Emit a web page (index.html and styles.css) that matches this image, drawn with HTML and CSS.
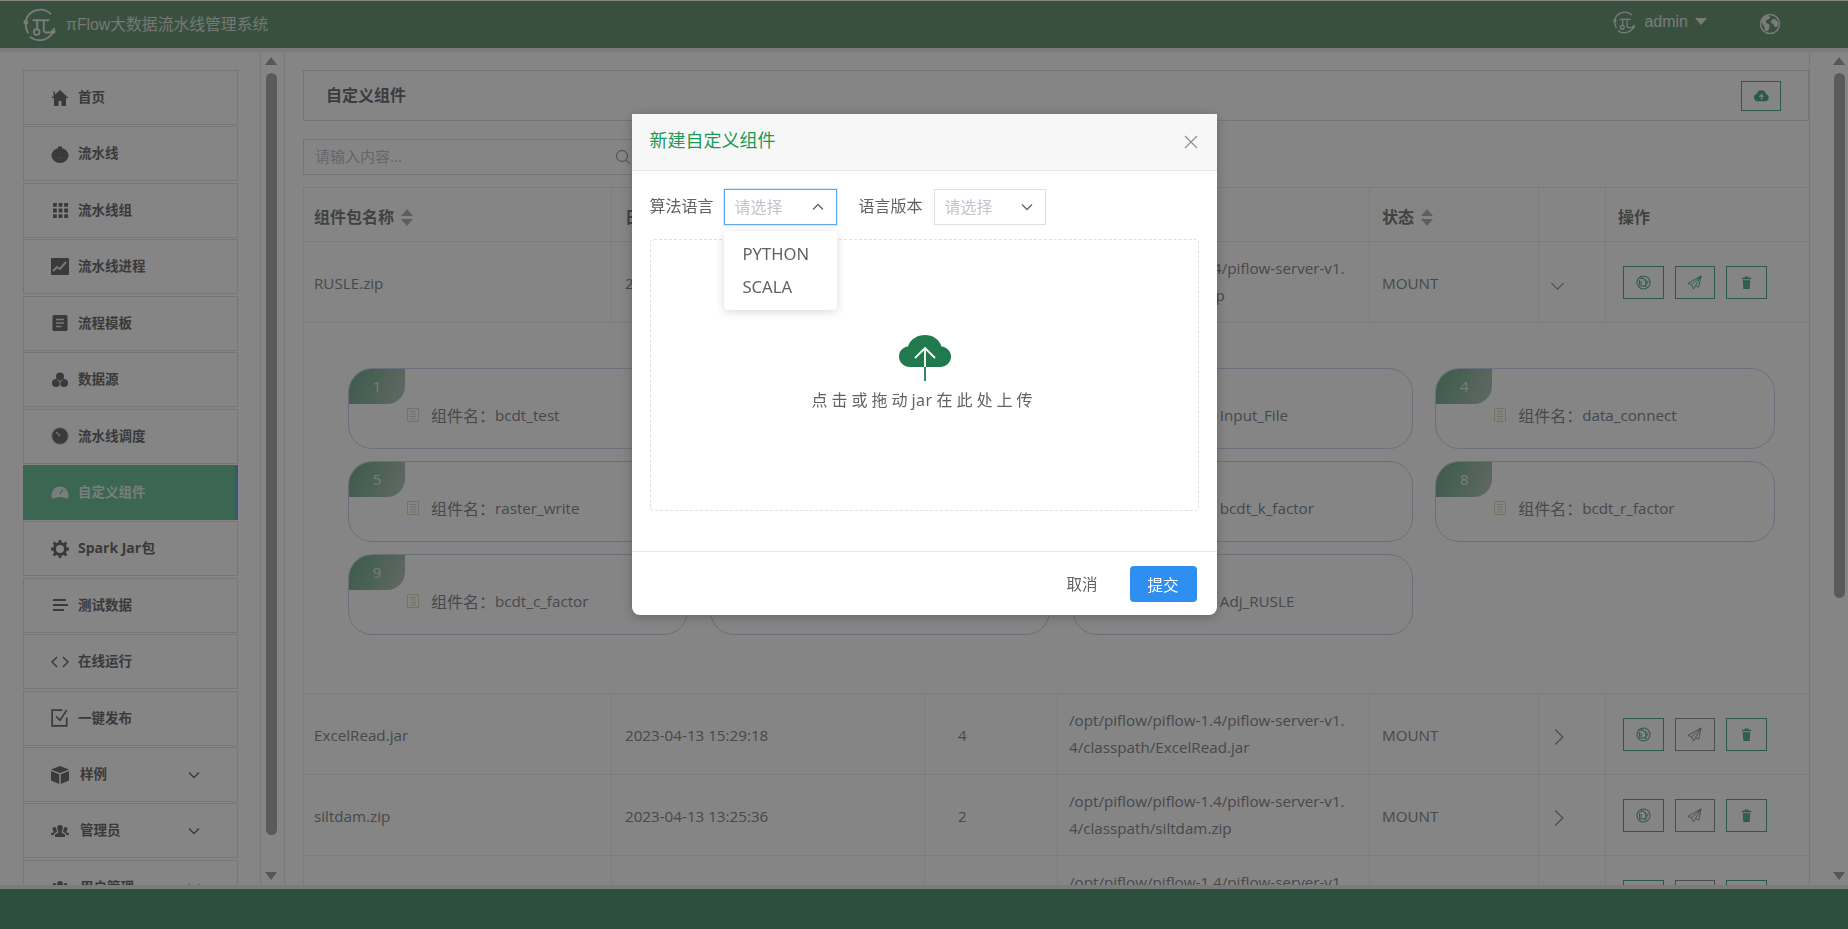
FILE: index.html
```html
<!DOCTYPE html>
<html lang="zh-CN">
<head>
<meta charset="utf-8">
<title>πFlow大数据流水线管理系统</title>
<link rel="stylesheet" href="styles.css">
</head>
<body>
<svg class="defs" width="0" height="0" aria-hidden="true">
  <symbol id="i-logo" viewBox="0 0 36 36">
    <g fill="none" stroke="currentColor" stroke-width="2" stroke-linecap="round">
      <path d="M3 13A16 16 0 0 1 29 6"/>
      <path d="M33 22A16 16 0 0 1 8 31"/>
      <path d="M3 17A16 16 0 0 0 5 26"/>
      <path d="M11 13H27"/>
      <path d="M15 13V22"/>
      <path d="M22 13V23Q22 26 25 26H31"/>
      <circle cx="14.500" cy="25.500" r="3"/>
    </g>
    <circle cx="3" cy="15" r="2.500" fill="currentColor"/>
    <circle cx="32" cy="25" r="2.500" fill="currentColor"/>
  </symbol>
  <symbol id="i-aperture" viewBox="0 0 16 16">
    <circle cx="8" cy="8" r="7" fill="none" stroke="currentColor" stroke-width="1.100"/>
    <path d="M5.500 2.500L11.500 6M13 6.500L9 12.500M11.500 12L4.500 11.500M4 12L3.500 5M4 3.500L8.500 3.500M9.500 5.500L11 9.500M5.500 6.500L5.500 10" fill="none" stroke="currentColor" stroke-width="1.100"/>
  </symbol>
  <symbol id="i-send" viewBox="0 0 16 16">
    <path d="M15 1L1 9l4 1.500L7 15l2-3.500 3.500 1.500ZM15 1L5 10.500M15 1L9 11.500" fill="none" stroke="currentColor" stroke-width="1" stroke-linejoin="round"/>
  </symbol>
  <symbol id="i-trash" viewBox="0 0 16 16">
    <path d="M3 3h10v1.500H3ZM6 1.500h4V3H6ZM4 5.500h8L11.300 15H4.700Z" fill="currentColor"/>
    <path d="M6.500 7v6.500M9.500 7v6.500" stroke="#ffffff" stroke-opacity=".35" stroke-width=".8"/>
  </symbol>
  <symbol id="i-doc" viewBox="0 0 14 14">
    <path d="M1.500.5h11v13h-11ZM4 3.500h6M4 6h6M4 8.500h6M4 11h6" fill="none" stroke="currentColor"/>
  </symbol>
  <symbol id="i-chev" viewBox="0 0 12 8">
    <path d="M1 1.500L6 6.500l5-5" fill="none" stroke="currentColor"/>
  </symbol>
  <symbol id="i-users" viewBox="0 0 18 14">
    <path d="M9 1a2.800 2.800 0 0 1 2.800 3c0 1.500-.8 3-1.300 3.500v1L14 10.500V13H4v-2.500l3.500-2v-1C7 7 6.200 5.500 6.200 4A2.800 2.800 0 0 1 9 1ZM3.500 3a2 2 0 0 1 1.700 1c0 1.500.5 3 1 3.700L3 9.500V11H0V9.500l2.500-1.300v-1C2 6.500 1.500 5.500 1.500 5a2 2 0 0 1 2-2ZM14.500 3a2 2 0 0 1 2 2c0 .5-.5 1.500-1 2.200v1L18 9.500V11h-3V9.500l-3.200-1.800c.5-.7 1-2.200 1-3.700A2 2 0 0 1 14.500 3Z" fill="currentColor"/>
  </symbol>
</svg>

<header class="topbar">
  <div class="brand">
    <svg class="logo"><use href="#i-logo"/></svg>
    <span class="brand-name">πFlow大数据流水线管理系统</span>
  </div>
  <div class="user">
    <svg class="logo-small"><use href="#i-logo"/></svg>
    <span class="user-name">admin</span>
    <span class="user-caret"></span>
    <svg class="globe" viewBox="0 0 22 22">
      <circle cx="11" cy="11" r="9.500" fill="none" stroke="currentColor" stroke-width="1.500"/>
      <path d="M8 2.500c2 1 3.500 1 3 2.500S8 6 7 8s2 2.500 3 3.500.5 4-.5 5.500S7 19 6 17 5 12 3 10 4 4 8 2.500ZM14 6c2-.5 4 1 5 3.500.5 2 0 3-1 4s-3 1-3-1-2.500-1.500-3-3S13 6.500 14 6Z" fill="currentColor"/>
    </svg>
  </div>
</header>

<div class="main">
  <aside class="side">
    <nav class="menu">
      <a class="item"><span class="ico"><svg viewBox="0 0 18 18"><path d="M9 1L4 5.500V2.500H2.500v4.500L.5 9h2.500v8h4.500v-5h3v5H15V9h2.500Z" fill="currentColor"/></svg></span><span class="txt">首页</span></a>
      <a class="item"><span class="ico"><svg viewBox="0 0 18 18"><ellipse cx="9" cy="10.500" rx="8.500" ry="7.500" fill="currentColor"/><path d="M7 3.500h4V1.500H7Z" fill="currentColor"/><path d="M7 13h1M10 13h1" stroke="#b8b8b8"/></svg></span><span class="txt">流水线</span></a>
      <a class="item"><span class="ico"><svg viewBox="0 0 18 18"><path d="M2 2h3.800v3.800H2ZM7.600 2h3.800v3.800H7.600ZM13.200 2H17v3.800h-3.800ZM2 7.600h3.800v3.800H2ZM7.600 7.600h3.800v3.800H7.600ZM13.200 7.600H17v3.800h-3.800ZM2 13.200h3.800V17H2ZM7.600 13.200h3.800V17H7.600ZM13.200 13.200H17V17h-3.800Z" fill="currentColor"/></svg></span><span class="txt">流水线组</span></a>
      <a class="item"><span class="ico"><svg viewBox="0 0 18 18"><rect width="18" height="17" rx="1" fill="currentColor"/><path d="M2 13l4-4 3 2 6-7" fill="none" stroke="#e8e8e8" stroke-width="2"/></svg></span><span class="txt">流水线进程</span></a>
      <a class="item"><span class="ico"><svg viewBox="0 0 18 18"><rect x="1.500" y="1" width="15" height="16" rx="1.500" fill="currentColor"/><path d="M5 5.500h8M5 9h8M5 12.500h5.500" stroke="#e8e8e8" stroke-width="1.500"/></svg></span><span class="txt">流程模板</span></a>
      <a class="item"><span class="ico"><svg viewBox="0 0 18 18"><circle cx="9" cy="5.500" r="4" fill="currentColor"/><circle cx="5" cy="12" r="4" fill="currentColor"/><circle cx="13" cy="12" r="4" fill="currentColor"/><path d="M6 9l3 2 3-2M9 11v3" fill="none" stroke="#e8e8e8" stroke-width=".8"/></svg></span><span class="txt">数据源</span></a>
      <a class="item"><span class="ico"><svg viewBox="0 0 18 18"><circle cx="9" cy="9" r="8" fill="currentColor"/><circle cx="9" cy="9" r="8.400" fill="none" stroke="#bdbdbd" stroke-width=".7"/><path d="M5 5l4 4" stroke="#ddd" stroke-width="1.500"/></svg></span><span class="txt">流水线调度</span></a>
      <a class="item active"><span class="ico"><svg viewBox="0 0 18 18"><path d="M1.500 16A8.500 8.500 0 1 1 16.500 16Q9 12 1.500 16Z" fill="currentColor"/><path d="M9 11l3-5" stroke="#72c39b" stroke-width="1.200"/></svg></span><span class="txt">自定义组件</span></a>
      <a class="item"><span class="ico"><svg viewBox="0 0 18 18"><circle cx="9" cy="9" r="5.500" fill="none" stroke="currentColor" stroke-width="3"/><path d="M9 0v4M9 14v4M0 9h4M14 9h4M2.600 2.600l3 3M12.400 12.400l3 3M15.400 2.600l-3 3M5.600 12.400l-3 3" stroke="currentColor" stroke-width="2.800"/></svg></span><span class="txt latin">Spark Jar包</span></a>
      <a class="item"><span class="ico"><svg viewBox="0 0 18 18"><path d="M2 4h13M2 9h15M2 14h11" stroke="currentColor" stroke-width="1.800"/></svg></span><span class="txt">测试数据</span></a>
      <a class="item"><span class="ico"><svg viewBox="0 0 18 12"><path d="M6 1L1 6l5 5M12 1l5 5-5 5" fill="none" stroke="currentColor" stroke-width="1.500"/></svg></span><span class="txt">在线运行</span></a>
      <a class="item"><span class="ico"><svg viewBox="0 0 16 16"><path d="M14 7.500V15H1V1h9" fill="none" stroke="currentColor" stroke-width="1.500"/><path d="M4.500 6.500L8 10l6-9" fill="none" stroke="currentColor" stroke-width="1.500"/></svg></span><span class="txt">一键发布</span></a>
      <a class="item sub"><span class="ico"><svg viewBox="0 0 18 18"><path d="M9 0l9 3.500L9 7 0 3.500ZM0 5l8.200 3.200V18L0 14.500ZM18 5L9.800 8.200V18l8.200-3.500Z" fill="currentColor"/></svg></span><span class="txt sub-label">样例</span><svg class="chev"><use href="#i-chev"/></svg></a>
      <a class="item sub"><span class="ico"><svg viewBox="0 0 18 14"><use href="#i-users"/></svg></span><span class="txt sub-label">管理员</span><svg class="chev"><use href="#i-chev"/></svg></a>
      <a class="item sub"><span class="ico"><svg viewBox="0 0 18 14"><use href="#i-users"/></svg></span><span class="txt sub-label">用户管理</span><svg class="chev"><use href="#i-chev"/></svg></a>
    </nav>
    <div class="bar">
      <span class="arrow up"></span>
      <span class="thumb thumb-side"></span>
      <span class="arrow down"></span>
    </div>
  </aside>

  <section class="content">
    <div class="page">
      <div class="page-head">
        <h2 class="page-title">自定义组件</h2>
        <button class="btn-op upload-btn"><svg viewBox="0 0 16 13"><path d="M4 12.500A3.800 3.800 0 0 1 3 5 5 5 0 0 1 12.800 5 3.800 3.800 0 0 1 12 12.500Z" fill="currentColor"/><path d="M8 11V6M5.800 8L8 5.600 10.200 8" fill="none" stroke="#e8e8e8" stroke-width="1.500"/></svg></button>
      </div>
      <div class="search">
        <span class="search-ph">请输入内容...</span>
        <svg class="search-ico" viewBox="0 0 16 16"><circle cx="7" cy="7" r="5.500" fill="none" stroke="currentColor" stroke-width="1.300"/><path d="M11 11l4 4" stroke="currentColor" stroke-width="1.300"/></svg>
      </div>
      <table class="grid">
        <colgroup>
          <col class="c1"><col class="c2"><col class="c3"><col class="c4"><col class="c5"><col class="c6"><col class="c7">
        </colgroup>
        <thead>
          <tr>
            <th>组件包名称<span class="sort"></span></th>
            <th>日期<span class="sort"></span></th>
            <th>数量</th>
            <th>路径</th>
            <th>状态<span class="sort"></span></th>
            <th></th>
            <th>操作</th>
          </tr>
        </thead>
        <tbody>
          <tr class="row">
            <td>RUSLE.zip</td>
            <td>2023-04-13 16:02:41</td>
            <td class="num">11</td>
            <td class="path">/opt/piflow/piflow-1.4/piflow-server-v1.4/classpath/RUSLE.zip</td>
            <td>MOUNT</td>
            <td class="toggle"><svg class="tg-down"><use href="#i-chev"/></svg></td>
            <td class="ops">
              <button class="btn-op"><svg><use href="#i-aperture"/></svg></button>
              <button class="btn-op"><svg><use href="#i-send"/></svg></button>
              <button class="btn-op"><svg><use href="#i-trash"/></svg></button>
            </td>
          </tr>
          <tr class="expand">
            <td colspan="7">
              <div class="cards">
                <div class="card"><span class="badge">1</span><div class="card-line"><svg class="doc"><use href="#i-doc"/></svg><span class="lbl">组件名：</span><span>bcdt_test</span></div></div>
                <div class="card"><span class="badge">2</span><div class="card-line"><svg class="doc"><use href="#i-doc"/></svg><span class="lbl">组件名：</span><span>bcdt_p_factor</span></div></div>
                <div class="card"><span class="badge">3</span><div class="card-line"><svg class="doc"><use href="#i-doc"/></svg><span class="lbl">组件名：</span><span>Input_File</span></div></div>
                <div class="card"><span class="badge">4</span><div class="card-line"><svg class="doc"><use href="#i-doc"/></svg><span class="lbl">组件名：</span><span>data_connect</span></div></div>
                <div class="card"><span class="badge">5</span><div class="card-line"><svg class="doc"><use href="#i-doc"/></svg><span class="lbl">组件名：</span><span>raster_write</span></div></div>
                <div class="card"><span class="badge">6</span><div class="card-line"><svg class="doc"><use href="#i-doc"/></svg><span class="lbl">组件名：</span><span>bcdt_s_factor</span></div></div>
                <div class="card"><span class="badge">7</span><div class="card-line"><svg class="doc"><use href="#i-doc"/></svg><span class="lbl">组件名：</span><span>bcdt_k_factor</span></div></div>
                <div class="card"><span class="badge">8</span><div class="card-line"><svg class="doc"><use href="#i-doc"/></svg><span class="lbl">组件名：</span><span>bcdt_r_factor</span></div></div>
                <div class="card"><span class="badge">9</span><div class="card-line"><svg class="doc"><use href="#i-doc"/></svg><span class="lbl">组件名：</span><span>bcdt_c_factor</span></div></div>
                <div class="card"><span class="badge">10</span><div class="card-line"><svg class="doc"><use href="#i-doc"/></svg><span class="lbl">组件名：</span><span>bcdt_l_factor</span></div></div>
                <div class="card"><span class="badge">11</span><div class="card-line"><svg class="doc"><use href="#i-doc"/></svg><span class="lbl">组件名：</span><span>Adj_RUSLE</span></div></div>
              </div>
            </td>
          </tr>
          <tr class="row">
            <td>ExcelRead.jar</td>
            <td>2023-04-13 15:29:18</td>
            <td class="num">4</td>
            <td class="path">/opt/piflow/piflow-1.4/piflow-server-v1.4/classpath/ExcelRead.jar</td>
            <td>MOUNT</td>
            <td class="toggle"><svg class="tg-right"><use href="#i-chev"/></svg></td>
            <td class="ops">
              <button class="btn-op"><svg><use href="#i-aperture"/></svg></button>
              <button class="btn-op grey"><svg><use href="#i-send"/></svg></button>
              <button class="btn-op"><svg><use href="#i-trash"/></svg></button>
            </td>
          </tr>
          <tr class="row">
            <td>siltdam.zip</td>
            <td>2023-04-13 13:25:36</td>
            <td class="num">2</td>
            <td class="path">/opt/piflow/piflow-1.4/piflow-server-v1.4/classpath/siltdam.zip</td>
            <td>MOUNT</td>
            <td class="toggle"><svg class="tg-right"><use href="#i-chev"/></svg></td>
            <td class="ops">
              <button class="btn-op"><svg><use href="#i-aperture"/></svg></button>
              <button class="btn-op grey"><svg><use href="#i-send"/></svg></button>
              <button class="btn-op"><svg><use href="#i-trash"/></svg></button>
            </td>
          </tr>
          <tr class="row">
            <td></td>
            <td></td>
            <td class="num"></td>
            <td class="path">/opt/piflow/piflow-1.4/piflow-server-v1.4/classpath/</td>
            <td>MOUNT</td>
            <td class="toggle"><svg class="tg-right"><use href="#i-chev"/></svg></td>
            <td class="ops">
              <button class="btn-op"><svg><use href="#i-aperture"/></svg></button>
              <button class="btn-op grey"><svg><use href="#i-send"/></svg></button>
              <button class="btn-op"><svg><use href="#i-trash"/></svg></button>
            </td>
          </tr>
        </tbody>
      </table>
    </div>
    <div class="bar bar-main">
      <span class="arrow up"></span>
      <span class="thumb thumb-main"></span>
      <span class="arrow down"></span>
    </div>
  </section>
</div>

<footer class="bottom"></footer>

<div class="overlay">
  <div class="modal">
    <div class="modal-head">
      <span class="modal-title">新建自定义组件</span>
      <svg class="modal-close" viewBox="0 0 14 14"><path d="M1 1l12 12M13 1L1 13" stroke="currentColor" stroke-width="1.200"/></svg>
    </div>
    <div class="modal-body">
      <div class="form-row">
        <label class="form-label">算法语言</label>
        <div class="select focus">
          <span class="select-ph">请选择</span>
          <svg class="select-arrow flip"><use href="#i-chev"/></svg>
          <ul class="options">
            <li>PYTHON</li>
            <li>SCALA</li>
          </ul>
        </div>
        <label class="form-label second">语言版本</label>
        <div class="select">
          <span class="select-ph">请选择</span>
          <svg class="select-arrow"><use href="#i-chev"/></svg>
        </div>
      </div>
      <div class="upload">
        <svg class="upload-ico" viewBox="0 0 52 46">
          <path d="M11 32C5 32 0 27.500 0 21.500 0 16 4 12 9 11.500 11 4.500 18 0 26 0 34 0 40.500 4.500 42.500 11.500 47.500 12 52 16 52 21.500 52 27.500 47 32 41 32Z" fill="#217a4e"/>
          <path d="M16 23L26 13 36 23M26 13V32" fill="none" stroke="#fff" stroke-width="1.800"/>
          <path d="M26 32V46" stroke="#217a4e" stroke-width="1.800"/>
        </svg>
        <p class="upload-text">点击或拖动<span class="upload-jar">jar</span>在此处上传</p>
      </div>
    </div>
    <div class="modal-foot">
      <button class="btn-text">取消</button>
      <button class="btn-primary">提交</button>
    </div>
  </div>
</div>
</body>
</html>
```

FILE: styles.css
```css
* { box-sizing: border-box; }
html, body { margin: 0; height: 100%; overflow: hidden; }
body {
  display: flex;
  flex-direction: column;
  height: 929px;
  background: #ffffff;
  color: #8a8c90;
  font-family: "Open Sans", "Noto Sans CJK SC", sans-serif;
  font-size: 16px;
}
.defs { position: absolute; }
button { font: inherit; cursor: pointer; }

/* top bar */
.topbar {
  flex: 0 0 47px;
  margin-top: 1px;
  display: flex;
  justify-content: space-between;
  align-items: center;
  background: #6e9a79;
  color: #e6ece8;
  position: relative;
  z-index: 2;
  box-shadow: 0 4px 0 #ebebeb;
}
.brand { display: flex; align-items: center; padding-left: 23px; }
.logo { width: 34px; height: 34px; margin-right: 9px; color: #e6ece8; }
.brand-name { font-size: 15.800px; font-family: "Liberation Sans", "Noto Sans CJK SC", sans-serif; padding-bottom: 3px; color: #dfe4e0; }
.user { display: flex; align-items: center; padding-right: 67px; }
.logo-small { width: 23px; height: 23px; margin: -4px 8px 0 0; }
.user-name { font-size: 16px; font-family: "Liberation Sans", sans-serif; margin-top: -6px; }
.user-caret {
  width: 0; height: 0;
  margin: -7px 0 0 7px;
  border-left: 6px solid transparent;
  border-right: 6px solid transparent;
  border-top: 7px solid #e6ece8;
}
.globe { width: 22px; height: 22px; margin: -1px 0 0 52px; }

/* main */
.main { flex: 1 1 auto; display: flex; min-height: 0; overflow: hidden; }

/* side menu */
.side { flex: 0 0 285px; display: flex; overflow: hidden; }
.menu { flex: 0 0 260px; padding: 22px 22px 0 23px; overflow: hidden; }
.item {
  display: flex;
  align-items: center;
  height: 55px;
  margin-bottom: 1.430px;
  padding-left: 27px;
  border: 1px solid #e4e4e4;
  color: #6f6f6f;
  font-size: 13.500px;
  font-weight: 700;
  font-family: "Noto Sans CJK SC", sans-serif;
}
.ico { flex: 0 0 18px; display: flex; justify-content: center; align-items: center; margin: 0 9px 0 0; }
.ico svg { width: 18px; height: 18px; display: block; }
.txt { padding-bottom: 3px; }
.active { background: #72c39b; border-color: #72c39b; border-right: 3px solid #62a5ee; color: #e8f2ed; }
.latin { font-family: "Open Sans", "Noto Sans CJK SC", sans-serif; font-size: 14px; }
.sub-label { flex: 1 1 auto; padding-left: 2px; }
.chev { width: 12px; height: 8px; margin-right: 37px; color: #6f6f6f; stroke-width: 1.300; }

/* scrollbars */
.bar {
  flex: 0 0 25px;
  display: flex;
  flex-direction: column;
  align-items: center;
  border-left: 1px solid #e7e7e7;
  border-right: 1px solid #e7e7e7;
  padding: 9px 3px 0 0;
}
.arrow { width: 0; height: 0; border-left: 6px solid transparent; border-right: 6px solid transparent; }
.arrow.up { border-bottom: 8px solid #a8a8a8; }
.arrow.down { border-top: 8px solid #a8a8a8; margin-top: auto; margin-bottom: 9px; }
.thumb { width: 11px; margin-top: 8px; border-radius: 6px; background: #adadad; }
.thumb-side { height: 762px; }
.thumb-main { height: 525px; }
.bar-main { flex: 0 0 39px; border: 0; border-left: 1px solid #e7e7e7; padding: 9px 0 0 20px; }

/* content */
.content { flex: 1 1 auto; display: flex; min-width: 0; overflow: hidden; }
.page { flex: 1 1 auto; min-width: 0; padding: 22px 0 0 18px; overflow: hidden; }
.page-head {
  display: flex;
  align-items: center;
  justify-content: space-between;
  height: 51px;
  padding: 0 27px 0 22px;
  border: 1px solid #e1e1e1;
}
.page-title { margin: 0 0 3px; font-size: 16px; font-weight: 700; color: #6f7480; font-family: "Noto Sans CJK SC", sans-serif; }
.btn-op {
  display: inline-flex;
  align-items: center;
  justify-content: center;
  width: 41px;
  height: 33px;
  padding: 0;
  background: transparent;
  border: 1px solid #57ad87;
  color: #57ad87;
  border-radius: 0;
}
.btn-op svg { width: 15px; height: 15px; }
.upload-btn { width: 40px; height: 30px; color: #57ad87; }
.btn-op.grey { border-color: #929292; color: #929292; }

.search {
  width: 342px;
  height: 36px;
  margin-top: 18px;
  display: flex;
  align-items: center;
  justify-content: space-between;
  padding: 0 13px 0 11px;
  border: 1px solid #e1e1e1;
}
.search-ph { font-size: 15px; color: #c0c4cc; padding-bottom: 3px; }
.search-ico { width: 16px; height: 16px; color: #a8abb2; }

/* table */
.grid {
  width: 1506px;
  margin-top: 12px;
  table-layout: fixed;
  border-collapse: collapse;
  color: #8a8c90;
  font-size: 15.200px;
}
.c1 { width: 308px; } .c2 { width: 313px; } .c3 { width: 133px; } .c4 { width: 312px; }
.c5 { width: 169px; } .c6 { width: 67px; } .c7 { width: 204px; }
.grid th, .grid td { border: 1px solid #ebeef5; padding: 2px 11px 0 10px; text-align: left; }
.grid th { height: 54px; font-size: 16px; font-weight: 700; color: #7d7d7d; font-family: "Noto Sans CJK SC", sans-serif; }
.grid th:nth-child(2), .grid td:nth-child(2) { padding-left: 13px; }
.grid th:nth-child(5), .grid td:nth-child(5) { padding-left: 12px; }
.grid th:nth-child(7) { padding-left: 12px; }
.sort { display: inline-block; vertical-align: -3px; margin-left: 7px; width: 12px; height: 17px; position: relative; }
.sort::before, .sort::after {
  content: "";
  position: absolute;
  left: 0;
  border-left: 6px solid transparent;
  border-right: 6px solid transparent;
}
.sort::before { top: 0; border-bottom: 7px solid #b4b4b4; }
.sort::after { bottom: 0; border-top: 7px solid #b4b4b4; }
.row { height: 81px; }
.grid .num { padding-left: 33px; }
.grid .path { word-break: break-all; line-height: 27px; padding: 0 18px 0 11px; }
.toggle svg { display: block; color: #9a9a9a; stroke-width: .9; }
.tg-down { width: 15px; height: 10px; margin: 5px 0 0 1px; }
.tg-right { width: 18px; height: 12px; margin: 4px 0 0 1px; transform: rotate(-90deg); }
.grid .ops { padding: 0 0 0 17px; }
.ops .btn-op { margin-right: 7px; vertical-align: middle; }
.ops .btn-op:nth-child(2) { width: 40px; }
.grid .expand td { height: 371px; padding: 45px 0 0 44px; vertical-align: top; }
.cards { display: grid; grid-template-columns: repeat(4, 340px); column-gap: 22.400px; row-gap: 12px; }
.card { height: 81px; border: 1px solid #d0d4ee; border-radius: 24px; overflow: hidden; font-size: 15.200px; }
.badge {
  display: block;
  width: 56px;
  height: 35px;
  line-height: 35px;
  text-align: center;
  color: #e8eeea;
  font-size: 15px;
  border-radius: 0 0 18px 0;
  background: linear-gradient(115deg, #6fb08f, #bcc8c2);
}
.card-line { display: flex; align-items: center; padding: 0 0 2px 57px; margin-top: -1px; }
.lbl { font-size: 16px; }
.doc { width: 14px; height: 14px; color: #e6d9bd; margin-right: 11px; flex: none; }

/* bottom */
.bottom {
  flex: 0 0 40px;
  background: #579875;
  position: relative;
  box-shadow: 0 -4px 0 #ebebeb;
}

/* overlay + dialog */
.overlay {
  position: fixed;
  inset: 0;
  background: rgba(0, 0, 0, .48);
  z-index: 10;
  display: flex;
  justify-content: center;
  align-items: flex-start;
}
.modal {
  width: 585px;
  margin-top: 114px;
  background: #fff;
  border-radius: 2px 2px 8px 8px;
  box-shadow: 0 2px 12px rgba(0, 0, 0, .25);
  color: #606266;
  font-family: "Noto Sans", "Noto Sans CJK SC", sans-serif;
}
.modal-head {
  display: flex;
  align-items: center;
  justify-content: space-between;
  height: 57px;
  padding: 0 19px 0 18px;
  background: #f7f7f7;
  border-bottom: 1px solid #e8e8e8;
}
.modal-title { font-size: 18px; color: #1c9a55; font-family: "Noto Sans CJK SC", sans-serif; padding-bottom: 7px; }
.modal-close { width: 14px; height: 14px; color: #8d9096; margin-bottom: 1px; }
.modal-body { padding: 18px 18px 40px 18px; }
.form-row { display: flex; align-items: center; height: 36px; }
.form-label { font-size: 16px; width: 74px; color: #606266; font-family: "Noto Sans CJK SC", sans-serif; padding-bottom: 5px; }
.form-label.second { margin-left: 22px; width: 75px; }
.select {
  position: relative;
  width: 112px;
  height: 36px;
  display: flex;
  align-items: center;
  justify-content: space-between;
  padding: 0 12px 0 10px;
  border: 1px solid #dcdfe6;
}
.select.focus { width: 113px; border-color: #60a9ef; box-shadow: 0 0 0 1px #d6e9fb; }
.select-ph { color: #c0c4cc; font-size: 16px; font-family: "Noto Sans CJK SC", sans-serif; padding-bottom: 3px; }
.select-arrow { width: 12px; height: 8px; color: #606266; stroke-width: 1.300; }
.select-arrow.flip { transform: rotate(180deg); }
.options {
  position: absolute;
  left: -1px;
  top: 41px;
  width: 113px;
  margin: 0;
  padding: 6px 0 7px;
  list-style: none;
  background: #fff;
  border-radius: 4px;
  box-shadow: 0 2px 10px rgba(0, 0, 0, .15);
  z-index: 3;
}
.options li { height: 33px; line-height: 33px; padding-left: 19px; font-size: 16.600px; }
.upload {
  height: 272px;
  margin-top: 14px;
  border: 1px dashed #dcdfe6;
  border-radius: 4px;
  display: flex;
  flex-direction: column;
  align-items: center;
  padding-top: 95px;
}
.upload-ico { width: 52px; height: 46px; display: block; margin-left: 1px; }
.upload-text { margin: 6px 0 0; font-size: 16px; letter-spacing: 4px; color: #606266; font-family: "Noto Sans", "Noto Sans CJK SC", sans-serif; }
.upload-jar { letter-spacing: .5px; margin-right: 4px; }
.modal-foot {
  display: flex;
  justify-content: flex-end;
  align-items: center;
  height: 64px;
  padding: 0 20px 0 0;
  border-top: 1px solid #e8e8e8;
}
.btn-text { background: none; border: 0; padding: 0 0 2px; margin-right: 32px; color: #606266; font-size: 15.500px; font-family: "Noto Sans CJK SC", sans-serif; }
.btn-primary { width: 67px; height: 36px; background: #2e8ff0; color: #fff; border: 0; border-radius: 4px; font-size: 15.500px; font-family: "Noto Sans CJK SC", sans-serif; }
```
